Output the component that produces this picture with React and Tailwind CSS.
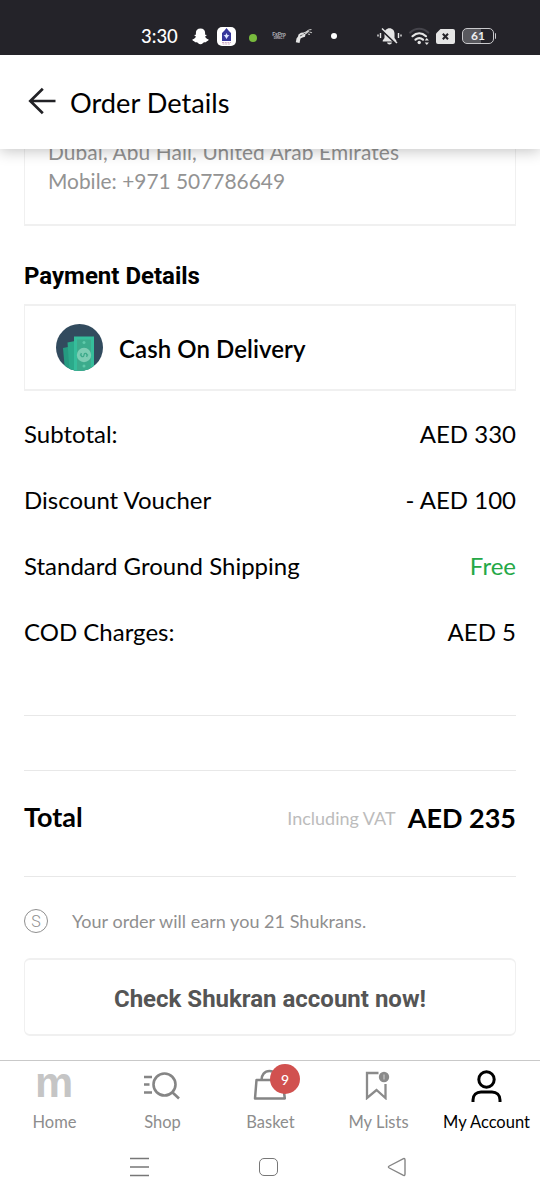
import clsx from "clsx";

const charges = [
  { label: "Subtotal:", value: "AED 330" },
  { label: "Discount Voucher", value: "- AED 100" },
  { label: "Standard Ground Shipping", value: "Free", free: true },
  { label: "COD Charges:", value: "AED 5" },
];

function StatusBar() {
  return (
    <div className="relative z-20 flex h-[55px] shrink-0 items-center bg-[#242329] pt-[18px] pl-[141px] text-white">
      <div className="flex h-[37px] items-center pb-[1px]">
        <span className="w-[51px] font-['Lato',sans-serif] text-[18.5px] leading-none font-medium">3:30</span>
        {/* Snapchat ghost */}
        <svg className="h-[17px] w-[17px]" viewBox="0 0 17 17" fill="#fff">
          <path d="M8.500.5c3 0 4.600 1.800 4.600 4.300v2c.8-.4 1.800.2 1.300.9l-1.300.9c.4 1.500 1.700 2.300 3.500 2.900.4.900-.8 1.400-1.900 1.700-.4 1.100-.8 1.200-2.300 1-1.200 0-1.800 2-3.900 2S5.800 14.200 4.600 14.200c-1.500.2-1.900.1-2.300-1C1.200 12.900 0 12.400.4 11.500c1.800-.6 3.100-1.400 3.500-2.900l-1.300-.9c-.5-.7.5-1.300 1.300-.9v-2C3.900 2.300 5.500.5 8.500.5z" />
        </svg>
        <svg className="ml-2 h-[19px] w-[19px]" viewBox="0 0 19 19">
          <rect width="19" height="19" rx="5" fill="#fff" />
          <path d="M5 6 7.500 3.500 9.500 1l2 2.500L14 6v8H5z" fill="#36369b" />
          <path d="m9.500 6 1 2 2 .3-1.500 1.300-1.500 2.400L8 9.600 6.500 8.300l2-.3z" fill="#dfe5ff" />
          <path d="M5 15.500h9M5.500 17h8" stroke="#c9a1bd" strokeWidth=".9" strokeDasharray="2 .7" />
        </svg>
        <i className="mt-[3px] ml-[13px] h-2 w-2 rounded-full bg-[#78ba3d]" />
        <span className="ml-[14px] flex w-[16px] flex-col items-center font-['Roboto',sans-serif] text-[5.500px] leading-[4px] font-bold tracking-[-0.2px] text-[#aaaab0]">
          <span>FxPro</span>
          <span className="text-[3.500px]">DIRECT</span>
        </span>
        {/* Revolver */}
        <svg className="ml-[8px] h-[15px] w-[18px]" viewBox="0 0 18 15" fill="#e4e4e4">
          <path d="M.8 13.200 1.500 9.500 3 7.500l.5-2L6 3.800l2.800-.3L11 2.500l2-1.500 1 .8L12 4l-1.500 1.300L10 7.800l-2.500.7-2 1-1 4.500z" />
          <path d="m11 4.500 3-2.500M13.500 1l3-.5M14.500 3l2.500.8M13 5l2 .5" fill="none" stroke="#bdbdbd" strokeWidth="1.200" />
          <path d="m5 7 2.500-1.200M8.500 5l2-1" stroke="#242329" strokeWidth=".7" />
        </svg>
        <i className="ml-[18px] h-[6px] w-[6px] rounded-full bg-white" />
        {/* Silent mode bell */}
        <svg className="ml-[40px] h-[19px] w-[25px]" viewBox="0 0 25 19">
          <path d="M12.500 1.200c3 0 5 2.300 5 5.200v4.500l1.800 2.600v1H5.700v-1l1.800-2.600V6.400c0-2.900 2-5.200 5-5.200zM10 15.500h5c-.4 2.600-4.600 2.600-5 0z" fill="#e5e5e5" />
          <path d="m4.500 3 15 14" stroke="#242329" strokeWidth="2" />
          <path d="m5 1.500 15 14.500" stroke="#e5e5e5" strokeWidth="1.500" />
          <path d="M3.500 6v5M1 7.500v2M21.500 6v5M24 7.500v2" stroke="#e5e5e5" strokeWidth="1.400" />
        </svg>
        <svg className="ml-[7px] h-[19px] w-[21px]" viewBox="0 0 21 19" fill="none" strokeLinecap="round">
          <path d="M1.200 5.500c5.500-5 12.500-5 18 0" stroke="#45444b" strokeWidth="2.200" />
          <path d="M3.500 9.200c4.200-3.900 9.300-3.900 13.500 0M6.500 12.700c2.500-2.200 5-2.200 7.500 0" stroke="#e5e5e5" strokeWidth="2.200" />
          <circle cx="10.200" cy="15.500" r="1.700" fill="#e5e5e5" />
          <path d="m15.700 13.500 2.100-2.500 2.100 2.500zm0 2 2.100 2.500 2.100-2.500z" fill="#e5e5e5" />
        </svg>
        <svg className="ml-[6px] h-[15px] w-[19px]" viewBox="0 0 19 15">
          <path d="M4.500 0H17a2 2 0 0 1 2 2v11a2 2 0 0 1-2 2H2a2 2 0 0 1-2-2V4.500z" fill="#e5e5e5" />
          <path d="m6.800 4.700 5.200 5.600M12 4.700l-5.200 5.600" stroke="#242329" strokeWidth="2" />
        </svg>
        <span className="ml-[7px] flex h-[16px] w-[32px] items-center justify-center rounded-[5px] border-[1.5px] border-[#c9c9cc] bg-linear-to-r from-[#59595e] from-60% to-[#242329] to-60% font-['Lato',sans-serif] text-[12px] leading-none font-bold text-[#eee]">61</span>
        <i className="ml-px h-[6px] w-[1px] rounded-r bg-[#c9c9cc]" />
      </div>
    </div>
  );
}

function Header() {
  return (
    <header className="relative z-10 flex h-[94px] shrink-0 items-center bg-white pl-[28px] shadow-[0_2px_14px_rgba(0,0,0,0.24)]">
      <svg className="-mt-[2px] h-[28px] w-[28px]" viewBox="0 0 28 28" fill="none" stroke="#222226" strokeWidth="2.700">
        <path d="M27.500 14H2M14.800 1.800 2.300 14l12.500 12.200" />
      </svg>
      <h1 className="ml-[14px] pt-[1px] text-[27.200px] leading-8 text-black">Order Details</h1>
    </header>
  );
}

function CashIcon() {
  return (
    <svg className="h-[47px] w-[47px]" viewBox="0 0 47 47">
      <defs>
        <clipPath id="coin">
          <circle cx="23.500" cy="23.500" r="23.500" />
        </clipPath>
      </defs>
      <g clipPath="url(#coin)">
        <path d="M0 0h47v47H0z" fill="#324b5e" />
        <path d="m7 24 10-2 2 25H9z" fill="#259a80" />
        <path d="m11.500 18.500 10-2V47h-8z" fill="#2ba98a" />
        <path d="M18 12.500h20V47H18z" fill="#35bd9b" />
        <path d="M21 15.500h14V47H21z" fill="#3cab8c" />
        <circle cx="28" cy="31" r="7.200" fill="#7dcdb4" />
        <circle cx="28" cy="18.500" r="1.500" fill="#5fc9aa" />
        <circle cx="28" cy="42" r="1.500" fill="#5fc9aa" />
        <path d="M25.300 29c-1.500 4 2.500 5 2.700 2s4-2 2.700 2M23.800 31h1.500M30.700 31h1.500" fill="none" stroke="#3aa889" strokeWidth="1.200" />
      </g>
    </svg>
  );
}

function NavItem({ label, active, children }) {
  return (
    <div className={clsx("flex w-[108px] flex-col items-center", active ? "text-black" : "text-[#8d8d8d]")}>
      <div className="flex h-[50px] items-center justify-center">{children}</div>
      <span className="pl-[1px] text-[16.500px] leading-[22px] whitespace-nowrap">{label}</span>
    </div>
  );
}

function BottomNav() {
  return (
    <nav className="flex h-[83px] shrink-0 border-t border-[#c9c9c9]">
      <NavItem label="Home">
        <span className="h-[50px] font-['Liberation_Sans',sans-serif] text-[43px] leading-[43px] font-bold text-[#c5c5c5]">m</span>
      </NavItem>
      <NavItem label="Shop">
        <svg className="-mt-[1px] -ml-[1px] h-[28px] w-[37px]" viewBox="0 0 37 28" fill="none" stroke="#858585">
          <circle cx="21.500" cy="12.500" r="11" strokeWidth="2.600" />
          <path d="m29 20 7 6.500" strokeWidth="2.600" />
          <path d="M1 5h8M1 12.500h5.500M1 20.500h8" strokeWidth="2.400" />
        </svg>
      </NavItem>
      <NavItem label="Basket">
        <div className="relative -mt-[2px]">
          <svg className="h-[32px] w-[34px]" viewBox="0 0 34 32" fill="none" stroke="#858585" strokeWidth="2.500">
            <path d="M3.500 11h26l2.300 18.500H2z" strokeLinejoin="round" />
            <path d="M8.500 11c0-5 3-9 8-9s8 4 8 9" />
          </svg>
          <span className="absolute -top-[5px] left-[17px] flex h-[30px] w-[30px] items-center justify-center rounded-full bg-[#d1514f] text-[14px] font-medium text-white">9</span>
        </div>
      </NavItem>
      <NavItem label="My Lists">
        <svg className="-mt-[1px] -ml-[2px] h-[29px] w-[26px]" viewBox="0 0 26 29" fill="none">
          <path d="M14.500 2H3v25l9.500-8 9 8V13" stroke="#8b8b8b" strokeWidth="2.300" />
          <circle cx="20" cy="6" r="5.200" fill="#8b8b8b" />
          <path d="M20 3.500v5" stroke="#c8c8c8" strokeWidth="1.200" />
        </svg>
      </NavItem>
      <NavItem label="My Account" active>
        <svg className="h-[33px] w-[31px]" viewBox="0 0 31 33" fill="none" stroke="#000" strokeWidth="3">
          <circle cx="15.500" cy="9.500" r="7.700" />
          <path d="M2 32v-2c0-5 3.500-8 8-8h11c4.500 0 8 3 8 8v2" />
        </svg>
      </NavItem>
    </nav>
  );
}

function SystemNav() {
  return (
    <div className="flex h-[57px] shrink-0 items-center pb-[9px] pl-[130px]">
      <svg className="h-[20px] w-[19px]" viewBox="0 0 19 20" stroke="#777" strokeWidth="1.500">
        <path d="M0 1.500h19M0 10h19M0 18.500h19" />
      </svg>
      <i className="ml-[110px] h-[18px] w-[19px] rounded-[5px] border-[1.5px] border-[#777]" />
      <svg className="ml-[109px] h-[20px] w-[20px]" viewBox="0 0 20 20" fill="none" stroke="#858585" strokeWidth="1.400">
        <path d="M2.300 9 16 1.800q2-.8 2 1.200v14q0 2-2 1.200L2.300 11q-1.800-1 0-2z" />
      </svg>
    </div>
  );
}

export default function App() {
  return (
    <div className="flex h-[1200px] w-[540px] flex-col overflow-hidden bg-white font-['Lato',sans-serif] text-black">
      <StatusBar />
      <Header />

      <main className="flex h-[911px] shrink-0 flex-col px-6">
        {/* Shipping address, scrolled under the header */}
        <section className="h-[77px] shrink-0 border-x-[1.5px] border-b-2 border-[#f0f0f0] px-[23px]">
          <p className="-mt-[12px] text-[20.900px] leading-[29px] text-[#939393]">
            <span className="tracking-[0.1px]">Dubai, Abu Hail, United Arab Emirates</span>
            <br />
            Mobile: +971 507786649
          </p>
        </section>

        <h2 className="mt-[34px] font-['Roboto',sans-serif] text-[24px] leading-[32px] font-bold">Payment Details</h2>
        <section className="mt-[12px] flex h-[87px] shrink-0 items-center border-x-[1.5px] border-y-2 border-[#f0f0f0] pl-[31px]">
          <CashIcon />
          <span className="ml-[16px] pt-[3px] text-[24px] font-semibold tracking-[0.08px]">Cash On Delivery</span>
        </section>

        <section className="mt-[10px] shrink-0 text-[24px]">
          {charges.map((row) => (
            <div key={row.label} className="flex h-[66px] items-center justify-between">
              <span>{row.label}</span>
              <span className={clsx(row.free && "text-[#25a847]")}>{row.value}</span>
            </div>
          ))}
        </section>

        <div className="mt-[50px] h-[56px] shrink-0 border-y border-[#e8e8e8]" />

        <section className="flex h-[106px] shrink-0 items-center border-b border-[#e8e8e8] pb-[10px]">
          <span className="-mt-[2px] text-[27px] font-bold">Total</span>
          <span className="ml-auto text-[18px] text-[#bcbcbc]">Including VAT</span>
          <span className="ml-[12px] text-[27px] font-bold">AED 235</span>
        </section>

        <section className="mt-[31px] flex h-[26px] shrink-0 items-center text-[#8f8f8f]">
          <span className="flex h-6 w-6 items-center justify-center rounded-full border border-[#8f8f8f] pt-[1px] font-['Roboto',sans-serif] text-[16px] font-light">S</span>
          <p className="ml-6 pt-[1px] text-[18px] tracking-[0.03px]">Your order will earn you 21 Shukrans.</p>
        </section>

        <button className="mt-[24px] h-[78px] shrink-0 rounded-[6px] border-x-[1.5px] border-y-2 border-[#f0f0f0] pt-[3px] font-['Roboto',sans-serif] text-[24px] font-bold text-[#555]">
          Check Shukran account now!
        </button>
      </main>

      <BottomNav />
      <SystemNav />
    </div>
  );
}
